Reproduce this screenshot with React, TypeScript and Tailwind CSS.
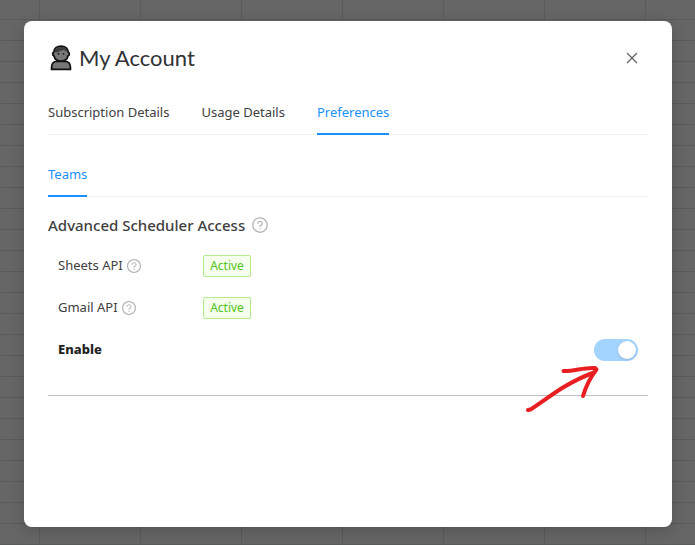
import React, { useState } from "react";
import { AiOutlineClose, AiOutlineQuestionCircle } from "react-icons/ai";
import clsx from "clsx";

const apis = [
  { name: "Sheets API", status: "Active" },
  { name: "Gmail API", status: "Active" },
];

const AccountIcon: React.FC = () => (
  <svg width="24" height="26" viewBox="0 0 24 26" aria-hidden="true">
    <path
      d="M3.600 24.400v-2.400c0-3.400 2.200-5.700 5.200-5.700h8.400c3 0 5.200 2.300 5.200 5.700v2.400z"
      fill="#777"
      stroke="#111"
      strokeWidth="1.800"
    />
    <path
      d="M5.800 7C6 3.400 9 1.100 13 1.100s7 2.300 7.200 5.900c1.500.6 1.500 3.200-.1 3.700-.8 3.300-3.500 5.400-7.100 5.400s-6.300-2.100-7.100-5.400c-1.600-.5-1.600-3.100-.1-3.700z"
      fill="#777"
      stroke="#111"
      strokeWidth="1.800"
    />
    <path
      d="M6.400 7.600C6.400 4.100 9.300 1.900 13 1.900s6.400 2 6.600 5c-1.900-.7-2.800-1.900-4.200-1.800C12.800 5.300 10.500 7.800 6.400 7.600z"
      fill="#3c3c3c"
    />
    <circle cx="10.500" cy="8.800" r="0.9" fill="#111" />
    <circle cx="15.500" cy="8.800" r="0.9" fill="#111" />
  </svg>
);

const Arrow: React.FC = () => (
  <svg
    className="pointer-events-none absolute top-9 right-12"
    width="76"
    height="50"
    viewBox="0 0 76 50"
    fill="none"
    stroke="#e81e20"
    strokeWidth="4"
    strokeLinecap="round"
    strokeLinejoin="round"
    aria-hidden="true"
  >
    <path d="M4 45l2.500-.5C18 37 27 30 39 22.500c10-6 20-11 31-15" />
    <path d="M39.500 6c11 .3 20-3.800 31.500-3l1.500 1.500C65 14 62 21 59 31" />
  </svg>
);

type TabsProps = {
  items: string[];
  active: string;
  onChange: (item: string) => void;
};

const Tabs: React.FC<TabsProps> = ({ items, active, onChange }) => (
  <div role="tablist" className="flex gap-8 border-b border-[#f0f0f0]">
    {items.map((item) => (
      <button
        key={item}
        type="button"
        role="tab"
        aria-selected={item === active}
        onClick={() => onChange(item)}
        className={clsx(
          "-mb-px border-b-2 pt-3 pb-2.5 leading-[22px]",
          item === active
            ? "border-[#1890ff] text-[#1890ff]"
            : "border-transparent"
        )}
      >
        {item}
      </button>
    ))}
  </div>
);

const Help: React.FC<{ label: string; size: number }> = ({ label, size }) => (
  <button type="button" aria-label={label} className="text-[#b4b4b4]">
    <AiOutlineQuestionCircle size={size} />
  </button>
);

const App: React.FC = () => {
  const [tab, setTab] = useState("Preferences");
  const [section, setSection] = useState("Teams");
  const [enabled, setEnabled] = useState(true);

  return (
    <div className="flex min-h-screen bg-[#666] bg-[linear-gradient(to_right,#5a5c5c_1px,transparent_1px),linear-gradient(to_bottom,#5a5c5c_1px,transparent_1px)] bg-[size:101px_21px] bg-[position:39px_19px] pt-[21px] pr-[23px] pb-[18px] pl-6 font-['Noto_Sans',sans-serif] text-[13px] text-[#404040]">
      <div
        role="dialog"
        aria-labelledby="account-title"
        className="flex-1 rounded-lg bg-white px-6 pt-[22px] shadow-[0_4px_16px_rgba(0,0,0,0.18)]"
      >
        <header className="flex h-[30px] items-center justify-between">
          <h1
            id="account-title"
            className="flex items-center gap-[7px] font-['Lato',sans-serif] text-[22px] leading-[30px] text-[#303134]"
          >
            <AccountIcon />
            My Account
          </h1>
          <button type="button" aria-label="Close" className="pr-2 text-[#666]">
            <AiOutlineClose size={16} />
          </button>
        </header>

        <div className="mt-4 space-y-4">
          <Tabs
            items={["Subscription Details", "Usage Details", "Preferences"]}
            active={tab}
            onChange={setTab}
          />
          <Tabs items={["Teams"]} active={section} onChange={setSection} />
        </div>

        <section className="mt-4 border-b border-[#bfbfbf] pb-6">
          <h2 className="flex items-center gap-1.5 text-[15px] leading-6 font-medium">
            Advanced Scheduler Access
            <Help label="About advanced scheduler access" size={18} />
          </h2>

          <table className="mt-2 w-full text-left">
            <tbody>
              {apis.map((api) => (
                <tr key={api.name} className="h-[42px]">
                  <th scope="row" className="w-[155px] pl-2.5 font-normal">
                    <span className="flex items-center gap-[3px]">
                      {api.name}
                      <Help label={`About ${api.name}`} size={16} />
                    </span>
                  </th>
                  <td>
                    <span className="block w-12 rounded-xs border border-[#b7eb8f] bg-[#f6ffed] text-center text-[12px] leading-5 text-[#52c41a]">
                      {api.status}
                    </span>
                  </td>
                </tr>
              ))}
            </tbody>
          </table>

          <div className="relative flex h-[42px] items-center justify-between px-2.5">
            <label htmlFor="enable" className="font-extrabold text-[#222]">
              Enable
            </label>
            <input
              id="enable"
              type="checkbox"
              role="switch"
              checked={enabled}
              onChange={(e) => setEnabled(e.target.checked)}
              className="h-[22px] w-11 appearance-none rounded-full bg-gray-300 p-0.5 before:block before:size-[18px] before:rounded-full before:bg-white before:shadow-sm checked:bg-[#a3d3ff] checked:before:ml-[22px]"
            />
            <Arrow />
          </div>
        </section>
      </div>
    </div>
  );
};

export default App;
